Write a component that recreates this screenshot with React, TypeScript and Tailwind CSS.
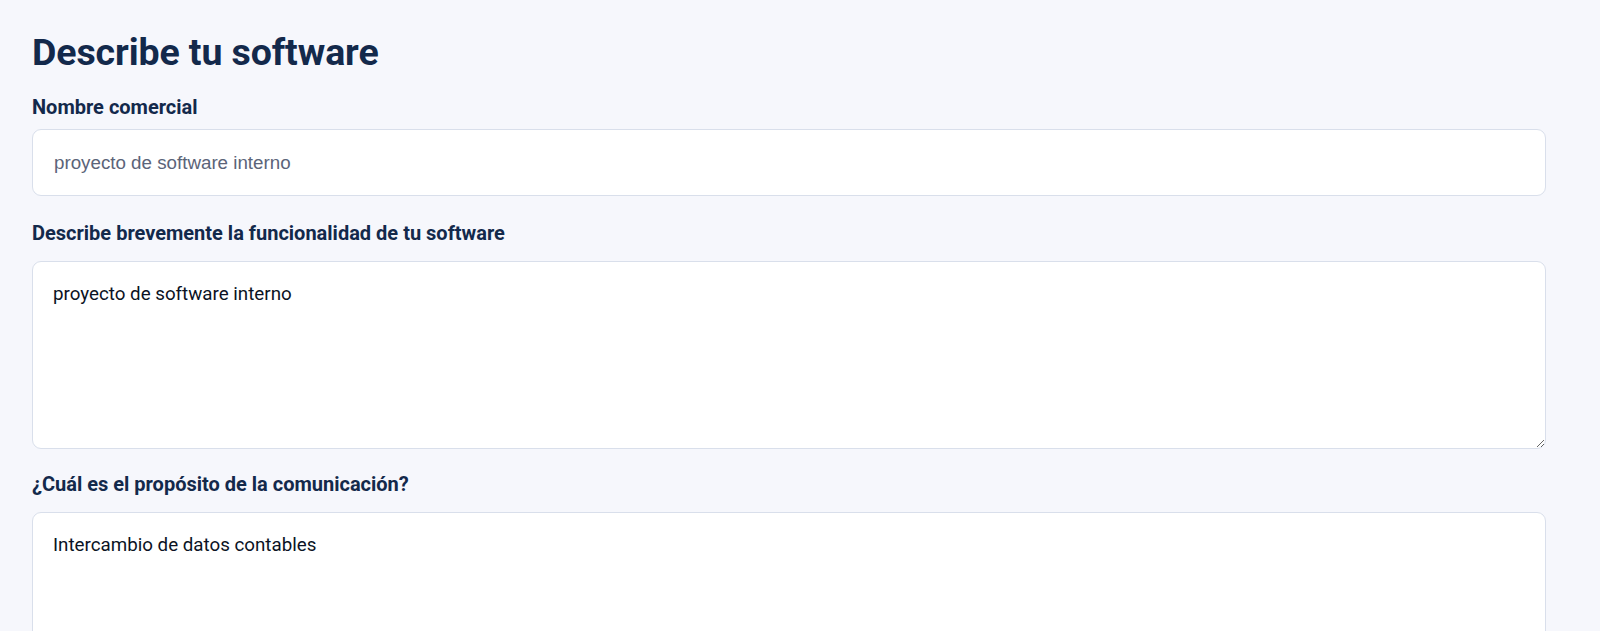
export default function App() {
  return (
    <div className="min-h-screen bg-[#f6f7fc] pl-8 pr-[54px] pt-[30px] font-['Roboto',sans-serif]">
      <h1 className="text-[37.5px] font-bold leading-[44px] tracking-[-0.1px] text-[#13294b]">
        Describe tu software
      </h1>

      {/* Nombre comercial */}
      <label className="mt-[21px] block text-[20px] font-bold leading-[24px] text-[#13294b]">
        Nombre comercial
      </label>
      <input
        type="text"
        defaultValue="proyecto de software interno"
        className="mt-[10px] block h-[67px] w-full rounded-[9px] border border-[#d9dfeb] bg-white pl-[21px] pr-5 font-['Liberation_Sans',Arial,sans-serif] text-[18.75px] text-[#5b6479] outline-none"
      />

      {/* Funcionalidad */}
      <label className="mt-[25px] block text-[20px] font-bold leading-[24px] text-[#13294b]">
        Describe brevemente la funcionalidad de tu software
      </label>
      <textarea
        defaultValue="proyecto de software interno"
        className="mt-4 block h-[188px] w-full rounded-[9px] border border-[#d9dfeb] bg-white px-5 pt-5 text-[18.75px] leading-[24px] text-[#0b1324] outline-none"
      />

      {/* Propósito */}
      <label className="mt-[23px] block text-[20px] font-bold leading-[24px] text-[#13294b]">
        ¿Cuál es el propósito de la comunicación?
      </label>
      <textarea
        defaultValue="Intercambio de datos contables"
        className="mt-4 block h-[188px] w-full rounded-[9px] border border-[#d9dfeb] bg-white px-5 pt-5 text-[18.75px] leading-[24px] text-[#0b1324] outline-none"
      />
    </div>
  )
}
